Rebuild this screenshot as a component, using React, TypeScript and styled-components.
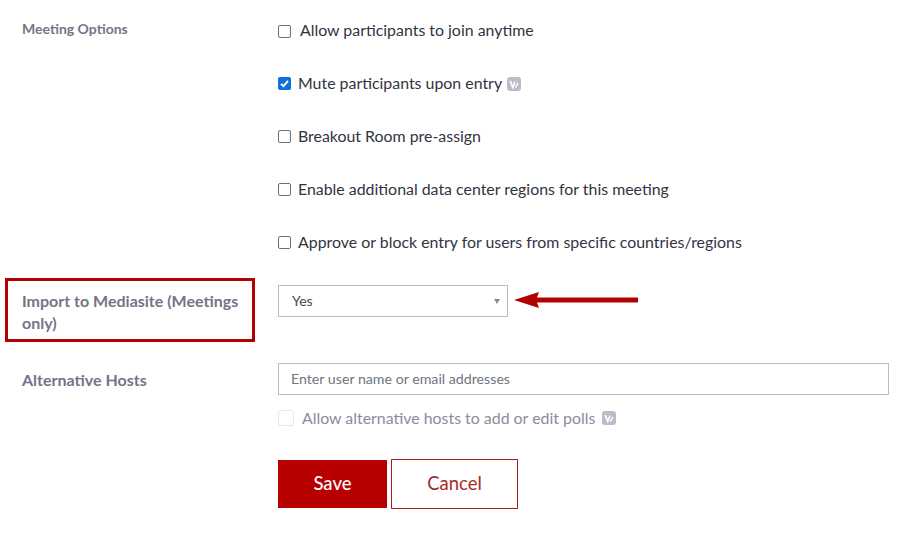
import styled, { createGlobalStyle } from 'styled-components';

const GlobalStyle = createGlobalStyle`
  html, body {
    margin: 0;
    padding: 0;
    background: #fff;
  }
  * {
    box-sizing: border-box;
  }
`;

const options = [
  { label: 'Allow participants to join anytime', checked: false, gap: 9, top: 2 },
  { label: 'Mute participants upon entry', checked: true, gap: 7, top: 0, badge: true },
  { label: 'Breakout Room pre-assign', checked: false, gap: 7, top: 0 },
  { label: 'Enable additional data center regions for this meeting', checked: false, gap: 7, top: 0 },
  { label: 'Approve or block entry for users from specific countries/regions', checked: false, gap: 7, top: 0 },
];

const VersionBadge = () => (
  <Badge viewBox="0 0 14 14" aria-hidden="true">
    <rect width="14" height="14" rx="3" fill="#bdbbca" />
    <path d="M3.2 4 5.8 10.4 8 4.6" fill="none" stroke="#fff" strokeWidth="1.7" />
    <path d="M8.4 10.6 11 6" fill="none" stroke="#fff" strokeWidth="1.5" />
  </Badge>
);

export default function App() {
  return (
    <Page>
      <GlobalStyle />
      <OptionsSection>
        <SideLabel>Meeting Options</SideLabel>
        <OptionList>
          {options.map((option) => (
            <OptionRow key={option.label} $gap={option.gap}>
              <CheckBox $checked={option.checked} $top={option.top}>
                {option.checked && (
                  <svg viewBox="0 0 13 13" width="13" height="13" aria-hidden="true">
                    <path d="M3 6.8 5.4 9.2 10 4" fill="none" stroke="#fff" strokeWidth="1.9" />
                  </svg>
                )}
              </CheckBox>
              <RowText>{option.label}</RowText>
              {option.badge && <VersionBadge />}
            </OptionRow>
          ))}
        </OptionList>
      </OptionsSection>

      <ImportSection>
        <Highlight>Import to Mediasite (Meetings only)</Highlight>
        <SelectBox>
          <RowText>Yes</RowText>
          <Caret />
        </SelectBox>
        <Arrow viewBox="0 0 124 16" aria-hidden="true">
          <path d="M0 8 25 0 23 5.5H124V10.5H23L25 16Z" fill="#b30000" />
        </Arrow>
      </ImportSection>

      <HostsSection>
        <HostsLabel>Alternative Hosts</HostsLabel>
        <HostsBody>
          <HostsInput placeholder="Enter user name or email addresses" />
          <DisabledRow>
            <DisabledBox />
            <RowText>Allow alternative hosts to add or edit polls</RowText>
            <VersionBadge />
          </DisabledRow>
          <Actions>
            <SaveButton>Save</SaveButton>
            <CancelButton>Cancel</CancelButton>
          </Actions>
        </HostsBody>
      </HostsSection>
    </Page>
  );
}

const Page = styled.div`
  width: 923px;
  height: 533px;
  overflow: hidden;
  padding: 4px 34px 0 5px;
  font-family: Lato, 'Liberation Sans', sans-serif;
  color: #33333f;
`;

const OptionsSection = styled.section`
  display: flex;
`;

const SideLabel = styled.div`
  width: 273px;
  padding: 16px 0 0 17px;
  font-size: 14px;
  line-height: 18px;
  font-weight: 700;
  color: #747487;
`;

const OptionList = styled.div`
  display: flex;
  flex-direction: column;
  flex: 1;
`;

const OptionRow = styled.div<{ $gap: number }>`
  height: 53px;
  display: flex;
  align-items: center;
  font-size: 15.9px;
  gap: ${({ $gap }) => $gap}px;
  & > svg {
    margin-left: -2px;
  }
`;

const RowText = styled.span`
  padding-bottom: 2px;
`;

const CheckBox = styled.span<{ $checked: boolean; $top: number }>`
  width: 13px;
  height: 13px;
  margin-top: ${({ $top }) => $top}px;
  flex: none;
  display: flex;
  border-radius: 2px;
  background: ${({ $checked }) => ($checked ? '#0f6fdc' : '#fff')};
  border: ${({ $checked }) => ($checked ? 'none' : '1px solid #6f6f6f')};
`;

const Badge = styled.svg`
  width: 14px;
  height: 14px;
  flex: none;
`;

const ImportSection = styled.section`
  display: flex;
  align-items: flex-start;
  margin-top: 9px;
`;

const Highlight = styled.div`
  width: 250px;
  height: 64px;
  border: 3px solid #b30000;
  padding: 9px 8px 0 14px;
  font-size: 16px;
  line-height: 22px;
  font-weight: 700;
  color: #747487;
`;

const SelectBox = styled.div`
  width: 230px;
  height: 32px;
  margin: 7px 0 0 23px;
  padding: 0 7px 0 13px;
  border: 1px solid #bcbcc4;
  display: flex;
  align-items: center;
  justify-content: space-between;
  font-size: 14px;
  color: #4a4a58;
`;

const Caret = styled.span`
  width: 0;
  height: 0;
  border-left: 3px solid transparent;
  border-right: 3px solid transparent;
  border-top: 5px solid #8a8a96;
`;

const Arrow = styled.svg`
  width: 124px;
  height: 16px;
  margin: 14px 0 0 6px;
`;

const HostsSection = styled.section`
  display: flex;
  margin-top: 21px;
`;

const HostsLabel = styled.div`
  width: 273px;
  padding: 6px 0 0 17px;
  font-size: 16px;
  line-height: 22px;
  font-weight: 700;
  color: #747487;
`;

const HostsBody = styled.div`
  flex: 1;
  display: flex;
  flex-direction: column;
`;

const HostsInput = styled.input`
  width: 100%;
  height: 32px;
  padding: 0 12px 2px;
  border: 1px solid #bcbcc4;
  outline: none;
  font-family: inherit;
  font-size: 14.2px;
  &::placeholder {
    color: #6e7680;
    opacity: 1;
  }
`;

const DisabledRow = styled.div`
  height: 22px;
  margin-top: 12px;
  display: flex;
  align-items: center;
  gap: 8px;
  font-size: 15.9px;
  color: #8c8c9a;
  & > svg {
    margin-left: -1px;
  }
`;

const DisabledBox = styled.span`
  width: 16px;
  height: 16px;
  border: 1px solid #e6e6ea;
  border-radius: 3px;
`;

const Actions = styled.div`
  display: flex;
  align-items: center;
  gap: 4px;
  margin-top: 30px;
`;

const SaveButton = styled.button`
  width: 109px;
  height: 48px;
  border: none;
  background: #b80000;
  color: #fff;
  font-family: inherit;
  font-size: 18.5px;
  font-weight: 500;
  padding-bottom: 3px;
`;

const CancelButton = styled.button`
  width: 127px;
  height: 50px;
  border: 1px solid #a81c1c;
  background: #fff;
  color: #a52a2a;
  font-family: inherit;
  font-size: 18.5px;
  padding-bottom: 3px;
`;
